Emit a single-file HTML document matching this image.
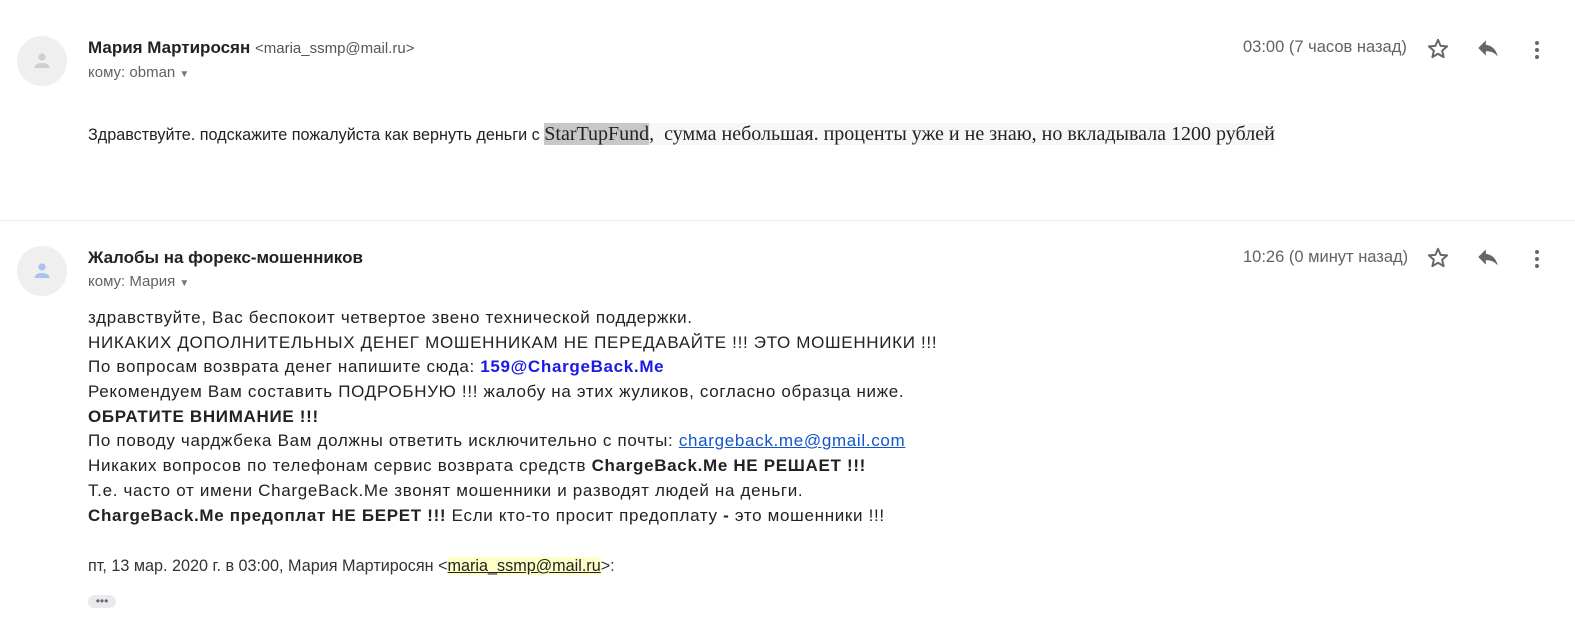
<!DOCTYPE html>
<html><head><meta charset="utf-8"><style>
body{margin:0;width:1575px;height:630px;background:#fff;position:relative;overflow:hidden;font-family:"Liberation Sans",Arial,sans-serif;color:#222}
.a{position:absolute;white-space:nowrap}
.av{position:absolute;width:50px;height:50px;border-radius:50%;background:#efefef}
.nm{font-size:17px;font-weight:bold;color:#222}
.em{font-size:15px;color:#555;font-weight:normal}
.to{font-size:15px;color:#5f6368}
.tm{font-size:16.5px;color:#5f6368}
.b{font-size:17px;line-height:20px;color:#222;letter-spacing:0.68px}
svg{position:absolute}
</style></head><body>

<div class="av" style="left:17px;top:36px"></div>
<svg style="left:30px;top:49px" width="24" height="24" viewBox="0 0 24 24"><circle cx="12" cy="8" r="3.6" fill="#cfcfcf"/><path d="M4.5 19c0-3.5 3.5-5 7.5-5s7.5 1.5 7.5 5z" fill="#cfcfcf"/></svg>
<div class="a nm" style="left:88px;top:38px">Мария Мартиросян <span class="em">&lt;maria_ssmp@mail.ru&gt;</span></div>
<div class="a to" style="left:88px;top:64px">кому: obman <span style="font-size:10px;color:#777">▼</span></div>
<div class="a tm" style="left:1243px;top:38px">03:00 (7 часов назад)</div>
<svg style="left:1425px;top:36px" width="26" height="26" viewBox="0 0 24 24"><path d="M12 3.5l2.4 5.6 6 .5-4.6 4 1.4 5.9L12 16.4l-5.2 3.1 1.4-5.9-4.6-4 6-.5z" fill="none" stroke="#666" stroke-width="1.8" stroke-linejoin="round"/></svg>
<svg style="left:1475px;top:35px" width="26" height="26" viewBox="0 0 24 24"><path d="M10 9V5l-7 7 7 7v-4.1c5 0 8.5 1.6 11 5.1-1-5-4-10-11-11z" fill="#666"/></svg>
<svg style="left:1527px;top:37px" width="20" height="26" viewBox="0 0 20 26"><circle cx="10" cy="6" r="2" fill="#666"/><circle cx="10" cy="13" r="2" fill="#666"/><circle cx="10" cy="20" r="2" fill="#666"/></svg>

<div class="a" style="left:88px;top:123px;font-size:16.2px;color:#222">Здравствуйте. подскажите пожалуйста как вернуть деньги с <span style="font-family:'Liberation Serif',serif;font-size:20px;background:#f7f7f7"><span style="background:#c8c8c8">StarTupFund</span>,&nbsp; сумма небольшая. проценты уже и не знаю, но вкладывала 1200 рублей</span></div>

<div class="a" style="left:0;top:220px;width:1575px;height:1px;background:#ebebeb"></div>

<div class="av" style="left:17px;top:246px"></div>
<svg style="left:30px;top:259px" width="24" height="24" viewBox="0 0 24 24"><circle cx="12" cy="8" r="3.6" fill="#a8c4ee"/><path d="M4.5 19c0-3.5 3.5-5 7.5-5s7.5 1.5 7.5 5z" fill="#a8c4ee"/></svg>
<div class="a nm" style="left:88px;top:248px">Жалобы на форекс-мошенников</div>
<div class="a to" style="left:88px;top:273px">кому: Мария <span style="font-size:10px;color:#777">▼</span></div>
<div class="a tm" style="left:1243px;top:248px">10:26 (0 минут назад)</div>
<svg style="left:1425px;top:245px" width="26" height="26" viewBox="0 0 24 24"><path d="M12 3.5l2.4 5.6 6 .5-4.6 4 1.4 5.9L12 16.4l-5.2 3.1 1.4-5.9-4.6-4 6-.5z" fill="none" stroke="#666" stroke-width="1.8" stroke-linejoin="round"/></svg>
<svg style="left:1475px;top:244px" width="26" height="26" viewBox="0 0 24 24"><path d="M10 9V5l-7 7 7 7v-4.1c5 0 8.5 1.6 11 5.1-1-5-4-10-11-11z" fill="#666"/></svg>
<svg style="left:1527px;top:246px" width="20" height="26" viewBox="0 0 20 26"><circle cx="10" cy="6" r="2" fill="#666"/><circle cx="10" cy="13" r="2" fill="#666"/><circle cx="10" cy="20" r="2" fill="#666"/></svg>

<div class="a b" style="left:88px;top:308px">здравствуйте, Вас беспокоит четвертое звено технической поддержки.</div>
<div class="a b" style="left:88px;top:333px">НИКАКИХ ДОПОЛНИТЕЛЬНЫХ ДЕНЕГ МОШЕННИКАМ НЕ ПЕРЕДАВАЙТЕ !!! ЭТО МОШЕННИКИ !!!</div>
<div class="a b" style="left:88px;top:357px">По вопросам возврата денег напишите сюда: <b style="color:#1a1ae6">159@ChargeBack.Me</b></div>
<div class="a b" style="left:88px;top:382px">Рекомендуем Вам составить ПОДРОБНУЮ !!! жалобу на этих жуликов, согласно образца ниже.</div>
<div class="a b" style="left:88px;top:407px"><b>ОБРАТИТЕ ВНИМАНИЕ !!!</b></div>
<div class="a b" style="left:88px;top:431px">По поводу чарджбека Вам должны ответить исключительно с почты: <u style="color:#1155cc">chargeback.me@gmail.com</u></div>
<div class="a b" style="left:88px;top:456px">Никаких вопросов по телефонам сервис возврата средств <b>ChargeBack.Me НЕ РЕШАЕТ !!!</b></div>
<div class="a b" style="left:88px;top:481px">Т.е. часто от имени ChargeBack.Me звонят мошенники и разводят людей на деньги.</div>
<div class="a b" style="left:88px;top:506px"><b>ChargeBack.Me предоплат НЕ БЕРЕТ !!!</b> Если кто-то просит предоплату <b>-</b> это мошенники !!!</div>

<div class="a" style="left:88px;top:557px;font-size:16.2px;color:#333">пт, 13 мар. 2020 г. в 03:00, Мария Мартиросян &lt;<u style="background:#ffffc8;color:#222">maria_ssmp@mail.ru</u>&gt;:</div>
<div class="a" style="left:88px;top:595px;width:28px;height:13px;border-radius:7px;background:#e8eaed;font-size:12px;line-height:13px;text-align:center;color:#666">•••</div>
</body></html>
